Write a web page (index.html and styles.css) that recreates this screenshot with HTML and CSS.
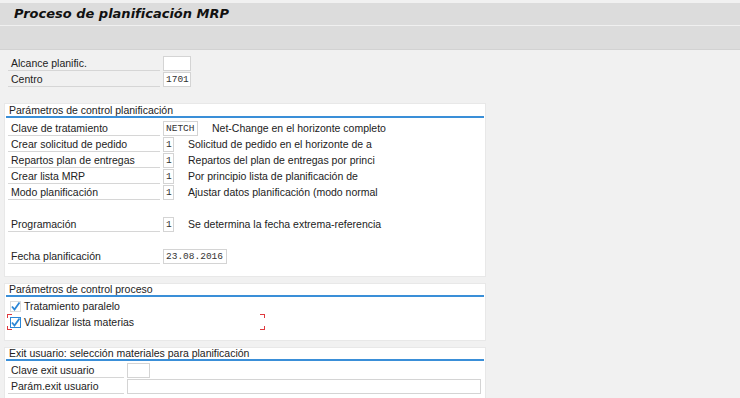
FILE: index.html
```html
<!DOCTYPE html>
<html lang="es">
<head>
    <title>Proceso de planificación MRP</title>
    <link rel="stylesheet" href="styles.css">
</head>
<body>
    <div class="titlebar">
        <h1>Proceso de planificación MRP</h1>
    </div>
    <div class="toolbar"></div>

    <div class="topfields">
        <div class="row">
            <span class="label">Alcance planific.</span>
            <span class="field w27"></span>
        </div>
        <div class="row">
            <span class="label">Centro</span>
            <span class="field w27">1701</span>
        </div>
    </div>

    <div class="panel panel-plan">
        <div class="panel-head">Parámetros de control planificación</div>
        <div class="row">
            <span class="label">Clave de tratamiento</span>
            <span class="field w34">NETCH</span>
            <span class="desc">Net-Change en el horizonte completo</span>
        </div>
        <div class="row">
            <span class="label">Crear solicitud de pedido</span>
            <span class="field w10">1</span>
            <span class="desc">Solicitud de pedido en el horizonte de a</span>
        </div>
        <div class="row">
            <span class="label">Repartos plan de entregas</span>
            <span class="field w10">1</span>
            <span class="desc">Repartos del plan de entregas por princi</span>
        </div>
        <div class="row">
            <span class="label">Crear lista MRP</span>
            <span class="field w10">1</span>
            <span class="desc">Por principio lista de planificación de</span>
        </div>
        <div class="row">
            <span class="label">Modo planificación</span>
            <span class="field w10">1</span>
            <span class="desc">Ajustar datos planificación (modo normal</span>
        </div>
        <div class="row empty"></div>
        <div class="row">
            <span class="label">Programación</span>
            <span class="field w10">1</span>
            <span class="desc">Se determina la fecha extrema-referencia</span>
        </div>
        <div class="row empty"></div>
        <div class="row">
            <span class="label">Fecha planificación</span>
            <span class="field w63">23.08.2016</span>
        </div>
    </div>

    <div class="panel panel-proc">
        <div class="panel-head">Parámetros de control proceso</div>
        <div class="check-row">
            <span class="checkbox">
                <svg viewBox="0 0 11 11" width="11" height="11"><path d="M2 5.5 L4.5 8.5 L9.5 1.5" fill="none" stroke="#2c86d6" stroke-width="1.8"/></svg>
            </span>
            <span>Tratamiento paralelo</span>
        </div>
        <div class="check-row focused">
            <span class="checkbox active">
                <svg viewBox="0 0 11 11" width="11" height="11"><path d="M2 5.5 L4.5 8.5 L9.5 1.5" fill="none" stroke="#2c86d6" stroke-width="1.8"/></svg>
            </span>
            <span>Visualizar lista materias</span>
        </div>
    </div>

    <div class="panel panel-exit">
        <div class="panel-head">Exit usuario: selección materiales para planificación</div>
        <div class="row">
            <span class="label short">Clave exit usuario</span>
            <span class="field w23"></span>
        </div>
        <div class="row">
            <span class="label short">Parám.exit usuario</span>
            <span class="field w354"></span>
        </div>
    </div>
</body>
</html>
```

FILE: styles.css
```css
body {
    margin: 0;
    padding: 0;
    background-color: #f1f1f1;
    font-family: "Liberation Sans", Arial, sans-serif;
    font-size: 10.5px;
    color: #222;
}

.titlebar {
    margin-top: 3px;
    height: 22px;
    background-color: #dcdcdc;
    border-bottom: 1px solid #f0f0f0;
}

h1 {
    margin: 0;
    padding-left: 14px;
    font-family: "DejaVu Sans", Verdana, sans-serif;
    font-size: 13px;
    font-weight: bold;
    font-style: italic;
    line-height: 22px;
    color: #111;
}

.toolbar {
    height: 23px;
    background-color: #dcdcdc;
    border-bottom: 1px solid #d2d2d2;
}

.topfields {
    padding: 5px 0 0 8px;
}

.row {
    display: flex;
    align-items: center;
    height: 16px;
}

.label {
    width: 152px;
    height: 15px;
    line-height: 15px;
    padding-left: 3px;
    box-sizing: border-box;
    border-bottom: 1px solid #d6d6d6;
    margin-right: 3px;
}

.label.short {
    width: 116px;
}

.field {
    height: 15px;
    box-sizing: border-box;
    background-color: #fff;
    border: 1px solid #d4d4d4;
    font-family: "Liberation Mono", "Courier New", monospace;
    font-size: 9.5px;
    line-height: 13px;
    padding-left: 2px;
    color: #333;
}

.w10 { width: 11px; }
.w23 { width: 23px; }
.w27 { width: 28px; }
.w34 { width: 35px; }
.w63 { width: 64px; }
.w354 { width: 354px; }

.desc {
    margin-left: 14px;
}

.panel {
    position: relative;
    width: 480px;
    margin-left: 5px;
    background-color: #fff;
    box-shadow: 0 0 0 1px #e8e8e8;
    padding-left: 3px;
    box-sizing: border-box;
}

.panel-head {
    height: 11px;
    line-height: 11px;
    padding-left: 3px;
    margin: 0 1px 0 -2px;
    border-bottom: 2px solid #3a8fd8;
}

.panel-plan {
    margin-top: 17px;
    padding-top: 1px;
    padding-bottom: 12px;
}

.panel-plan .panel-head {
    margin-bottom: 2px;
}

.panel-proc {
    margin-top: 8px;
    padding-bottom: 10px;
}

.panel-proc .panel-head {
    margin-bottom: 1px;
}

.panel-exit {
    margin-top: 8px;
    padding-bottom: 6px;
}

.panel-exit .panel-head {
    margin-bottom: 1px;
}

.check-row {
    position: relative;
    display: flex;
    align-items: center;
    height: 16px;
    padding-left: 2px;
}

.checkbox {
    display: inline-block;
    width: 11px;
    height: 11px;
    box-sizing: border-box;
    border: 1px solid #dcdcdc;
    margin-right: 3px;
    line-height: 0;
}

.checkbox svg {
    margin: -1px 0 0 -1px;
}

.checkbox.active {
    border-color: #2c86d6;
}

/* focus frame: only the four corners are drawn */
.focused::after {
    content: "";
    position: absolute;
    left: -1px;
    top: 0;
    width: 258px;
    height: 16px;
    --c: #e0393e;
    background:
        linear-gradient(var(--c), var(--c)) left top / 5px 1px no-repeat,
        linear-gradient(var(--c), var(--c)) left top / 1px 4px no-repeat,
        linear-gradient(var(--c), var(--c)) left bottom / 5px 1px no-repeat,
        linear-gradient(var(--c), var(--c)) left bottom / 1px 4px no-repeat,
        linear-gradient(var(--c), var(--c)) right top / 5px 1px no-repeat,
        linear-gradient(var(--c), var(--c)) right top / 1px 4px no-repeat,
        linear-gradient(var(--c), var(--c)) right bottom / 5px 1px no-repeat,
        linear-gradient(var(--c), var(--c)) right bottom / 1px 4px no-repeat;
}
```
